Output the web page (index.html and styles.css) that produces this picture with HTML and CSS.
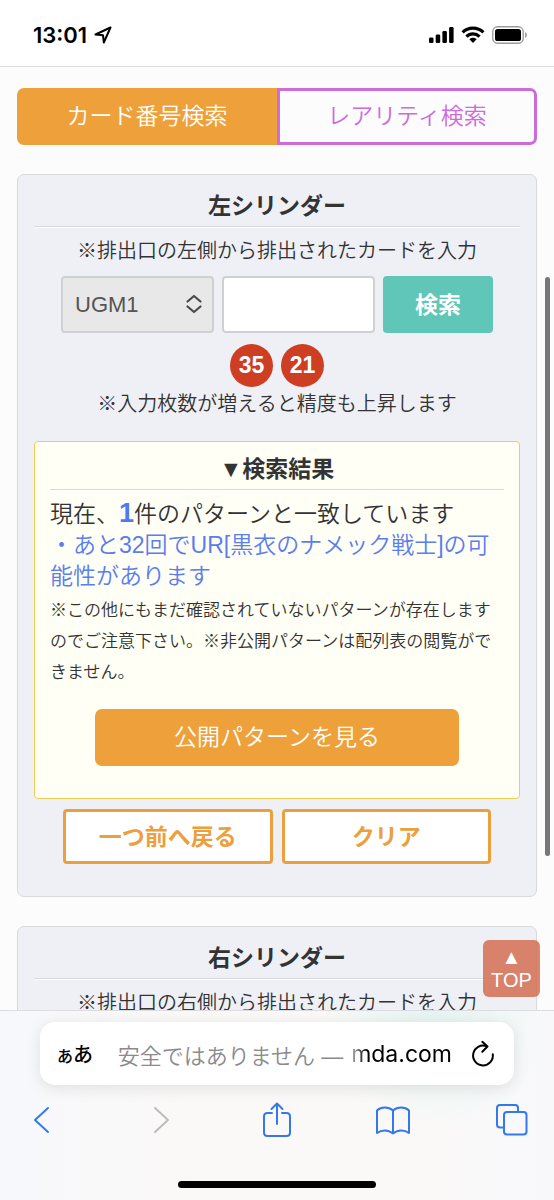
FILE: index.html
```html
<!DOCTYPE html>
<html lang="ja">
<head>
<meta charset="utf-8">
<meta name="viewport" content="width=device-width, initial-scale=1">
<title>カード番号検索</title>
<link rel="stylesheet" href="styles.css">
</head>
<body>
<header class="status">
  <div class="status-left">
    <span>13:01</span>
    <svg width="18" height="18" viewBox="0 0 18 18" fill="none" stroke="#000" stroke-width="2" stroke-linejoin="round"><path d="M16.5 1.5L1.5 8.5L9 9.2L9.8 16.5Z"/></svg>
  </div>
  <div class="status-right">
    <svg width="25" height="18" viewBox="0 0 25 18"><rect x="0" y="11.500" width="4.500" height="5.500" rx="1.300"/><rect x="6.700" y="8.500" width="4.500" height="8.500" rx="1.300"/><rect x="13.400" y="5" width="4.500" height="12" rx="1.300"/><rect x="20.100" y="1" width="4.500" height="16" rx="1.300"/></svg>
    <svg width="24" height="18" viewBox="0 0 24 18"><g fill="none" stroke="#000" stroke-width="3.200"><path d="M1.600 6.400A15 15 0 0 1 22.400 6.400"/><path d="M5.500 10.600A9.300 9.300 0 0 1 18.500 10.600"/></g><path d="M8.400 13.300A5.200 5.200 0 0 1 15.600 13.300L12 17Z"/></svg>
    <svg width="36" height="18" viewBox="0 0 36 18"><rect x="0.800" y="0.800" width="30.400" height="16.400" rx="4.800" fill="none" stroke="#9c9c9e" stroke-width="1.400"/><rect x="3" y="3" width="26" height="12" rx="2.600"/><path d="M33 6.200C35.500 7 35.500 11 33 11.800Z" fill="#9c9c9e"/></svg>
  </div>
</header>
<main class="page">
  <nav class="tabs">
    <button class="tab tab-on" type="button">カード番号検索</button>
    <button class="tab tab-off" type="button">レアリティ検索</button>
  </nav>
  <section class="card">
    <h2 class="title">左シリンダー</h2>
    <p class="hint">※排出口の左側から排出されたカードを入力</p>
    <form class="search">
      <div class="picker">
        <select class="field select" aria-label="弾"><option>UGM1</option></select>
        <svg class="chevrons" width="18" height="20" viewBox="0 0 18 20" fill="none" stroke="#4a4a4a" stroke-width="2.200" stroke-linecap="round" stroke-linejoin="round"><path d="M2.500 7.500L9 2L15.500 7.500M2.500 12.500L9 18L15.500 12.500"/></svg>
      </div>
      <input class="field" type="text" aria-label="カード番号">
      <button class="submit" type="button">検索</button>
    </form>
    <div class="numbers"><span class="number">35</span><span class="number">21</span></div>
    <p class="hint precision">※入力枚数が増えると精度も上昇します</p>
    <div class="result">
      <h3 class="title result-title">▼検索結果</h3>
      <p class="summary">現在、<strong class="count">1</strong>件のパターンと一致しています</p>
      <p class="summary guess">・あと32回でUR[黒衣のナメック戦士]の可能性があります</p>
      <p class="notice">※この他にもまだ確認されていないパターンが存在しますのでご注意下さい。※非公開パターンは配列表の閲覧ができません。</p>
      <button class="reveal" type="button">公開パターンを見る</button>
    </div>
    <div class="actions">
      <button class="action" type="button">一つ前へ戻る</button>
      <button class="action" type="button">クリア</button>
    </div>
  </section>
  <section class="card">
    <h2 class="title">右シリンダー</h2>
    <p class="hint">※排出口の右側から排出されたカードを入力</p>
  </section>
</main>
<a class="to-top" href="#"><span>▲</span><span>TOP</span></a>
<div class="scrollbar"></div>
<footer class="browser">
  <div class="address">
    <button class="text-size" type="button" aria-label="表示設定"><small class="small-a">あ</small>あ</button>
    <div class="url"><span class="insecure">安全ではありません —</span><span class="domain">mda.com</span></div>
    <button class="icon" type="button" aria-label="再読み込み"><svg width="24" height="28" viewBox="0 0 24 28" fill="none" stroke="#000" stroke-width="2" stroke-linecap="round" stroke-linejoin="round"><path d="M21.800 14.200A9.900 9.900 0 1 1 15.500 6.300M11.300 1.800L16.500 6.500L11.300 11.700"/></svg></button>
  </div>
  <nav class="toolbar">
    <button class="icon" type="button" aria-label="戻る"><svg width="32" height="36" viewBox="0 0 32 36"><path d="M22 6L9 18L22 30"/></svg></button>
    <button class="icon muted" type="button" aria-label="進む"><svg width="36" height="36" viewBox="0 0 36 36"><path d="M14 6L27 18L14 30"/></svg></button>
    <button class="icon" type="button" aria-label="共有"><svg width="32" height="36" viewBox="0 0 32 36"><path d="M12 11H7.500Q4 11 4 14.500V30.500Q4 34 7.500 34H26.500Q30 34 30 30.500V14.500Q30 11 26.500 11H22M17 22V1.500M11.500 7L17 1.500L22.500 7"/></svg></button>
    <button class="icon" type="button" aria-label="ブックマーク"><svg width="36" height="36" viewBox="0 0 36 36"><path d="M18 8.500C13.500 4.500 6 4.500 2 8.500V31C6.500 27.500 13.500 27.500 18 31.500C22.500 27.500 29.500 27.500 34 31V8.500C30 4.500 22.500 4.500 18 8.500ZM18 8.500V31.500"/></svg></button>
    <button class="icon" type="button" aria-label="タブ"><svg width="34" height="36" viewBox="0 0 34 36"><path d="M9.500 25.500H6Q3 25.500 3 22.500V6Q3 3 6 3H21Q24 3 24 6V9.500"/><rect x="10" y="10" width="22.500" height="22.500" rx="3"/></svg></button>
  </nav>
  <div class="home"></div>
</footer>
</body>
</html>
```
FILE: styles.css
```css
* { box-sizing: border-box; }

body {
  margin: 0;
  height: 100vh;
  display: flex;
  flex-direction: column;
  position: relative;
  background: #fcfcfc;
  color: #333;
  font-family: "Liberation Sans", "Noto Sans CJK JP", sans-serif;
  font-size: 23px;
  font-weight: 350;
}

button, input, select { font: inherit; color: inherit; margin: 0; padding: 0; }
h2, h3, p { margin: 0; }
svg { display: block; flex: none; }

.status {
  display: flex;
  justify-content: space-between;
  align-items: center;
  height: 67px;
  padding: 4px 26px 0 33px;
  background: #fff;
  border-bottom: 1px solid #dededf;
  flex: none;
}
.status-left {
  display: flex;
  align-items: center;
  gap: 7px;
  font-family: Inter, sans-serif;
  font-size: 22px;
  font-weight: 600;
  color: #000;
}
.status-right { display: flex; align-items: center; gap: 7px; }

.page {
  flex: 1;
  min-height: 0;
  overflow-y: auto;
  scrollbar-width: none;
  padding: 21px 17px 0;
}

.tabs { display: grid; grid-template-columns: 1fr 1fr; margin-bottom: 29px; }
.tab { height: 57px; }
.tab-on { padding-bottom: 5px; border: 0; border-radius: 7px 0 0 7px; background: #eea13a; color: #fff; }
.tab-off { padding-bottom: 5px; border: 3px solid #cc6bd9; border-radius: 0 7px 7px 0; background: #fdfcfd; color: #cc6bd9; }

.card {
  padding: 15px 16px 32px;
  margin-bottom: 29px;
  border: 1px solid #d8dade;
  border-radius: 7px;
  background: #eff0f6;
}
.title {
  padding-bottom: 4px;
  border-bottom: 1px solid #d6d8dc;
  box-shadow: 0 1px 0 #fff;
  font-size: 23px;
  line-height: 32px;
  font-weight: 700;
  text-align: center;
}
.hint { padding-top: 8px; font-size: 20px; line-height: 32px; text-align: center; }
.precision { padding-top: 1px; }

.search {
  display: grid;
  grid-template-columns: 1fr 1fr 110px;
  gap: 8px;
  margin: 9px 27px 11px;
}
.picker { position: relative; }
.field {
  width: 100%;
  height: 57px;
  padding: 0 12px;
  border: 2px solid #cfd0d2;
  border-radius: 4px;
  background: #fff;
  font-size: 22px;
}
.select { appearance: none; background: #e8e8e8; color: #555; }
.chevrons { position: absolute; right: 11px; top: 18px; pointer-events: none; }
.submit {
  padding-bottom: 4px;
  border: 0;
  border-radius: 4px;
  background: #5fc6b8;
  color: #fff;
  font-weight: 700;
}

.numbers { display: flex; justify-content: center; gap: 8px; }
.number {
  width: 43px;
  height: 43px;
  border-radius: 50%;
  background: #cd3e22;
  color: #fff;
  font-weight: 700;
  line-height: 43px;
  text-align: center;
}

.result {
  margin-top: 21px;
  padding: 11px 15px 32px;
  border: 1px solid #f0cd55;
  border-radius: 4px;
  background: #fffff6;
}
.result-title { margin-bottom: 9px; }
.summary { line-height: 31px; }
.count { font-size: 27px; line-height: 1; font-weight: 700; color: #4f79f6; }
.guess { color: #5a7eee; }
.notice { margin-top: 3px; font-size: 17px; line-height: 31px; }
.reveal {
  display: block;
  width: 80%;
  height: 57px;
  margin: 21px auto 0;
  padding-bottom: 5px;
  border: 0;
  border-radius: 7px;
  background: #eea13a;
  color: #fff;
}

.actions { display: grid; grid-template-columns: 1fr 1fr; gap: 9px; margin: 10px 29px 0; }
.action {
  height: 55px;
  padding-bottom: 4px;
  border: 3px solid #eba03d;
  border-radius: 4px;
  background: #fff;
  color: #eba03d;
  font-weight: 700;
}

.to-top {
  position: absolute;
  right: 14px;
  bottom: 203px;
  width: 57px;
  height: 57px;
  padding-top: 6px;
  display: flex;
  flex-direction: column;
  align-items: center;
  border-radius: 6px;
  background: rgba(211, 102, 73, 0.8);
  color: #fff;
  font-size: 20px;
  line-height: 23px;
  text-decoration: none;
}
.scrollbar {
  position: absolute;
  right: 4px;
  top: 277px;
  width: 5px;
  height: 579px;
  border-radius: 3px;
  background: #77777a;
}

.browser {
  flex: none;
  height: 190px;
  padding-top: 11px;
  border-top: 1px solid #dcdde0;
  background:
    radial-gradient(circle at 78% 5%, #e4f5f2, rgba(228, 245, 242, 0) 24%),
    linear-gradient(90deg, #f7f8fc, #fbf9f7 35%, #fbf9f8 75%, #f8f8fb);
  color: #000;
}
.address {
  display: flex;
  align-items: center;
  height: 63px;
  margin: 0 40px;
  padding: 0 19px 0 17px;
  border-radius: 15px;
  background: #fff;
  box-shadow: 0 3px 16px rgba(0, 0, 0, 0.1);
}
.text-size {
  display: flex;
  align-items: baseline;
  border: 0;
  background: none;
  font-size: 20px;
  font-weight: 500;
}
.small-a { font-size: 16px; }
.url { flex: 1; display: flex; justify-content: flex-end; align-items: center; gap: 8px; margin-right: 19px; }
.insecure { font-size: 22px; color: #8a8a8d; }
.domain {
  font-family: Inter, sans-serif;
  font-size: 23px;
  font-weight: 400;
  background: linear-gradient(90deg, #bbb, #000 16%);
  background-clip: text;
  -webkit-background-clip: text;
  color: transparent;
}
.icon { border: 0; background: none; color: #3478f0; }
.toolbar { display: flex; justify-content: space-between; margin: 17px 26px 0; }
.toolbar svg {
  fill: none;
  stroke: currentColor;
  stroke-width: 2;
  stroke-linecap: round;
  stroke-linejoin: round;
}
.toolbar .muted { color: #bdbcbc; }
.home { width: 198px; height: 7px; margin: 43px auto 0; border-radius: 4px; background: #000; }
```
